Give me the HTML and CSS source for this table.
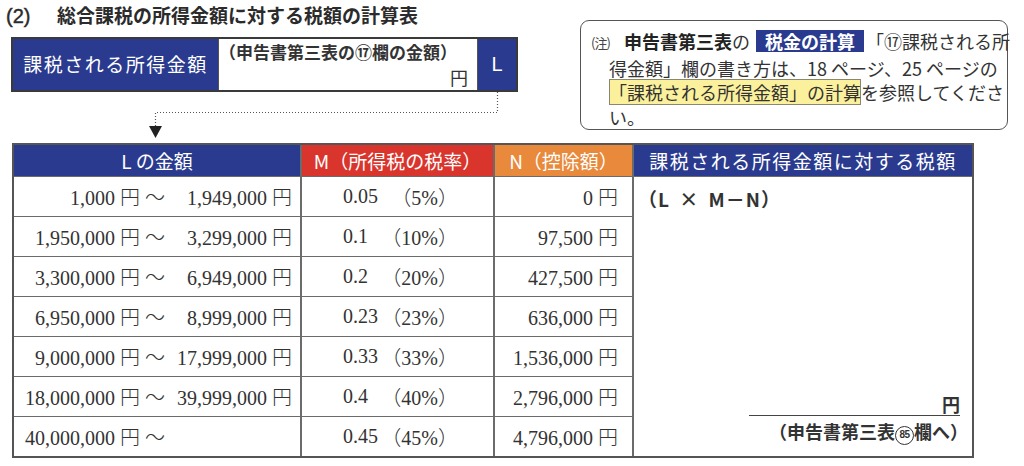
FILE: index.html
```html
<!DOCTYPE html>
<html lang="ja">
<head>
<meta charset="utf-8">
<title>総合課税の所得金額に対する税額の計算表</title>
<link rel="stylesheet" href="styles.css">
</head>
<body>
<div class="page">
  <div class="top">
    <div class="left">
      <h2 class="title"><span class="num">(2)</span>総合課税の所得金額に対する税額の計算表</h2>
      <div class="lbox">
        <div class="lbox-label">課税される所得金額</div>
        <div class="lbox-field">
          <span class="lbox-hint">（申告書第三表の⑰欄の金額）</span>
          <span class="lbox-yen">円</span>
        </div>
        <div class="lbox-key">L</div>
      </div>
      <svg class="connector" width="520" height="51" viewBox="0 0 520 51">
        <path d="M497.5 0 V20.5 H155.5 V34" fill="none" stroke="#555" stroke-width="1.2" stroke-dasharray="1 2"/>
        <polygon points="149,34 162,34 155.5,46" fill="#222"/>
      </svg>
    </div>
    <div class="note">
      <span class="mark">(注)</span><b class="strong">申告書第三表</b>の<span class="tag">税金の計算</span>「⑰課税される所<br>得金額」欄の書き方は、18 ページ、25 ページの<br><span class="hl">「課税される所得金額」の計算</span>を参照してくださ<br>い。
    </div>
  </div>

  <div class="table">
    <div class="th th-blue">L の金額</div>
    <div class="th th-red">M（所得税の税率）</div>
    <div class="th th-orange">N（控除額）</div>
    <div class="th th-blue th-wide">課税される所得金額に対する税額</div>

    <div class="td range"><span class="from">1,000 円 ～</span><span class="to">1,949,000 円</span></div>
    <div class="td rate"><span>0.05</span><span>（5%）</span></div>
    <div class="td ded">0 円</div>
    <div class="td result">
      <div class="formula">（L × M－N）</div>
      <div class="answer">
        <div class="answer-line">円</div>
        <div class="answer-note">（申告書第三表<span class="circ">85</span>欄へ）</div>
      </div>
    </div>

    <div class="td range"><span class="from">1,950,000 円 ～</span><span class="to">3,299,000 円</span></div>
    <div class="td rate"><span>0.1</span><span>（10%）</span></div>
    <div class="td ded">97,500 円</div>

    <div class="td range"><span class="from">3,300,000 円 ～</span><span class="to">6,949,000 円</span></div>
    <div class="td rate"><span>0.2</span><span>（20%）</span></div>
    <div class="td ded">427,500 円</div>

    <div class="td range"><span class="from">6,950,000 円 ～</span><span class="to">8,999,000 円</span></div>
    <div class="td rate"><span>0.23</span><span>（23%）</span></div>
    <div class="td ded">636,000 円</div>

    <div class="td range"><span class="from">9,000,000 円 ～</span><span class="to">17,999,000 円</span></div>
    <div class="td rate"><span>0.33</span><span>（33%）</span></div>
    <div class="td ded">1,536,000 円</div>

    <div class="td range"><span class="from">18,000,000 円 ～</span><span class="to">39,999,000 円</span></div>
    <div class="td rate"><span>0.4</span><span>（40%）</span></div>
    <div class="td ded">2,796,000 円</div>

    <div class="td range"><span class="from">40,000,000 円 ～</span><span class="to"></span></div>
    <div class="td rate"><span>0.45</span><span>（45%）</span></div>
    <div class="td ded">4,796,000 円</div>
  </div>
</div>
</body>
</html>
```

FILE: styles.css
```css
* { box-sizing: border-box; }

html, body {
  margin: 0;
  padding: 0;
  background: #fff;
}

body {
  font-family: "Noto Sans CJK JP", "Noto Sans", sans-serif;
  color: #333;
}

.page {
  width: 1024px;
  height: 466px;
  overflow: hidden;
}

.top {
  display: flex;
  align-items: flex-start;
}

.left {
  width: 570px;
  flex: none;
}

.title {
  margin: 0 0 0 6px;
  height: 30px;
  line-height: 30px;
  font-size: 19px;
  font-weight: 700;
  color: #2b2b2b;
  white-space: nowrap;
}

.title .num {
  font-family: "Liberation Sans", "Noto Sans CJK JP", sans-serif;
  font-size: 20px;
  font-weight: 400;
  -webkit-text-stroke: 0.4px #2b2b2b;
  display: inline-block;
  width: 51px;
}

.lbox {
  margin: 7px 0 0 11px;
  width: 507px;
  height: 55px;
  display: flex;
  border: 2px solid #3a3a3a;
}

.lbox-label {
  width: 205px;
  background: #2a3b8f;
  color: #fff;
  font-size: 19px;
  letter-spacing: 1.5px;
  display: flex;
  align-items: center;
  justify-content: center;
  padding-bottom: 2px;
}

.lbox-field {
  width: 260px;
  display: flex;
  flex-direction: column;
  justify-content: space-between;
  padding: 0 9px 0 0;
  line-height: 25px;
  border-left: 1px solid #555;
  border-right: 1px solid #555;
}

.lbox-hint {
  font-size: 17px;
  font-weight: 700;
  color: #333;
  white-space: nowrap;
}

.lbox-yen {
  align-self: flex-end;
  font-size: 18px;
  color: #333;
}

.lbox-key {
  flex: 1;
  background: #2a3b8f;
  color: #fff;
  font-family: "Liberation Sans", "Noto Sans CJK JP", sans-serif;
  font-size: 20px;
  display: flex;
  align-items: center;
  justify-content: center;
}

.connector {
  display: block;
}

.note {
  margin: 20px 0 0 10px;
  width: 428px;
  height: 110px;
  border: 1.5px solid #555;
  border-radius: 9px;
  padding: 8px 4px 0 28px;
  text-indent: -18px;
  font-size: 18px;
  line-height: 24.5px;
  color: #333;
  white-space: nowrap;
}

.note .mark {
  display: inline-block;
  text-indent: 0;
  width: 33px;
  font-size: 13px;
  letter-spacing: -1px;
  color: #444;
  vertical-align: 1px;
}

.note .strong {
  font-weight: 700;
  color: #222;
}

.note .tag {
  display: inline-block;
  text-indent: 0;
  background: #2a3b8f;
  color: #fff;
  font-weight: 700;
  padding: 0 9px;
  line-height: 22px;
  margin: 0 2px 0 6px;
}

.note .hl {
  background: #fbf19c;
  box-shadow: inset 0 0 0 1px #8a8770;
}

.table {
  margin-left: 12px;
  width: 962px;
  display: grid;
  grid-template-columns: 286px 191px 137px 338px;
  grid-template-rows: 31px repeat(7, 39px);
  column-gap: 2px;
  row-gap: 1px;
  background: #6b6b6b;
  border: 2px solid #555;
}

.th {
  color: #fff;
  font-size: 19px;
  display: flex;
  align-items: center;
  justify-content: center;
  white-space: nowrap;
  padding-bottom: 1px;
}

.th-blue { background: #2a3b8f; }
.th-red { background: #d9352d; }
.th-orange { background: #e8893b; }

.th-wide {
  letter-spacing: 1.5px;
}

.td {
  background: #fff;
  font-family: "Liberation Serif", "Noto Sans CJK JP", serif;
  font-size: 20px;
  font-weight: 300;
  color: #333;
  display: flex;
  align-items: center;
  white-space: nowrap;
}

.range .from {
  width: 151px;
  text-align: right;
}

.range .to {
  flex: 1;
  text-align: right;
  padding-right: 8px;
}

.rate {
  justify-content: space-between;
  padding: 0 35px 0 41px;
}

.ded {
  justify-content: flex-end;
  padding-right: 14px;
}

.result {
  grid-column: 4;
  grid-row: 2 / span 7;
  flex-direction: column;
  align-items: stretch;
  justify-content: space-between;
  padding: 8px 12px 11px 4px;
  font-family: "Noto Sans CJK JP", "Noto Sans", sans-serif;
  font-weight: 400;
}

.formula {
  font-size: 19px;
  font-weight: 700;
  letter-spacing: 1px;
  word-spacing: 4px;
  color: #333;
}

.answer {
  display: flex;
  flex-direction: column;
  align-items: flex-end;
}

.answer-line {
  width: 211px;
  text-align: right;
  font-size: 18px;
  font-weight: 700;
  line-height: 22px;
  border-bottom: 1.5px solid #444;
}

.answer-note {
  margin-top: 2px;
  margin-right: -8px;
  font-size: 18px;
  font-weight: 700;
  line-height: 26px;
  color: #333;
}

.circ {
  display: inline-block;
  width: 19px;
  height: 19px;
  border: 1.3px solid #333;
  border-radius: 50%;
  font-size: 10px;
  line-height: 16px;
  text-align: center;
  letter-spacing: -0.5px;
  vertical-align: 1px;
  font-family: "Liberation Sans", sans-serif;
  font-weight: 700;
}
```
